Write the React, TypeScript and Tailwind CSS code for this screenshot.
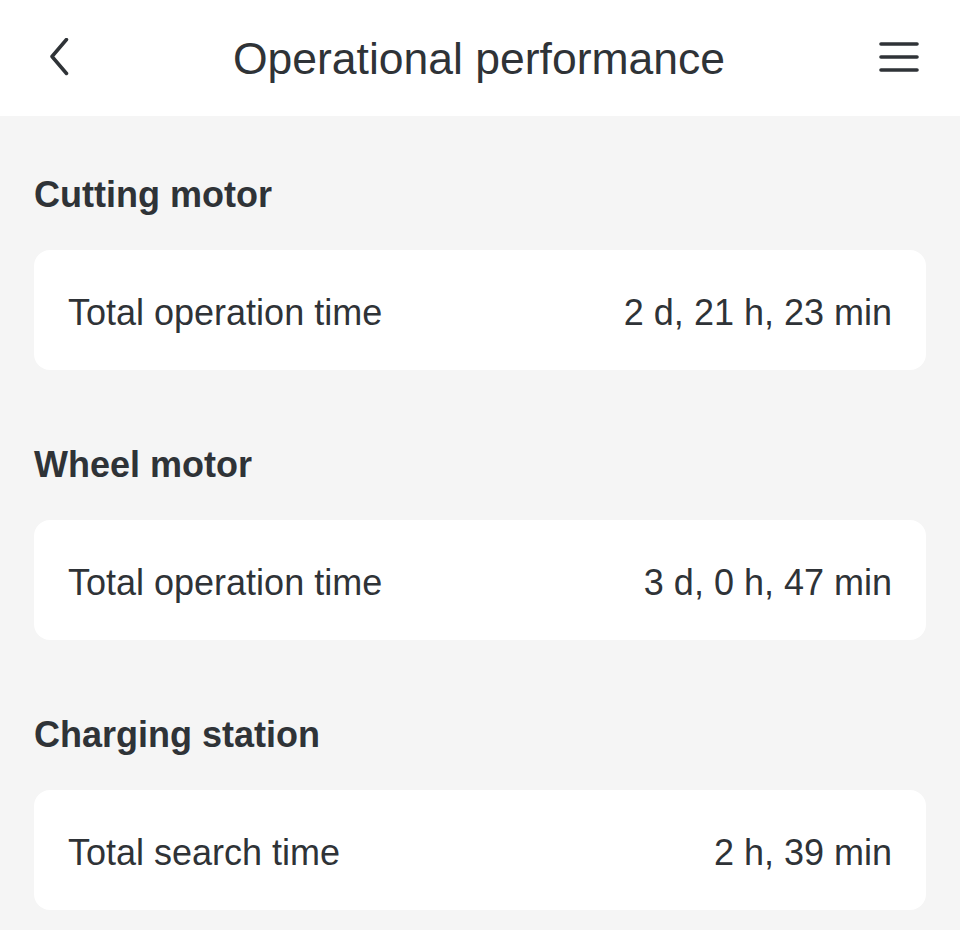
import React from "react";

const sections = [
  { title: "Cutting motor", label: "Total operation time", value: "2 d, 21 h, 23 min" },
  { title: "Wheel motor", label: "Total operation time", value: "3 d, 0 h, 47 min" },
  { title: "Charging station", label: "Total search time", value: "2 h, 39 min" },
];

export default function App() {
  return (
    <div
      className="w-[960px] h-[930px] bg-[#f5f5f5] text-[#2f3337] overflow-hidden"
      style={{ fontFamily: '"Liberation Sans", Arial, sans-serif' }}
    >
      <header className="h-[116px] bg-white flex items-center justify-between pl-[44px] pr-[40px] pb-[1px]">
        <svg width="30" height="40" viewBox="0 0 30 40" fill="none">
          <path d="M22.5 1.5 L8 18.5 L22.5 35.5" stroke="#2f3337" strokeWidth="3.5" strokeLinecap="round" strokeLinejoin="round" />
        </svg>
        <h1 className="text-[44.5px] leading-none font-normal ml-[6px] mt-[4px]">Operational performance</h1>
        <svg width="42" height="34" viewBox="0 0 42 34" fill="none">
          <path d="M3 3 H39 M3 16 H39 M3 29 H39" stroke="#2f3337" strokeWidth="3.6" strokeLinecap="round" />
        </svg>
      </header>
      <main className="px-[34px] pt-[58px] flex flex-col gap-[74px]">
        {sections.map((s) => (
          <section key={s.title} className="flex flex-col gap-[36px]">
            <h2 className="text-[36px] leading-[40px] font-bold mt-[1px] -mb-[1px]">{s.title}</h2>
            <div className="h-[120px] bg-white rounded-[16px] flex items-center justify-between px-[34px] pt-[6px]">
              <span className="text-[36px]">{s.label}</span>
              <span className="text-[36px]">{s.value}</span>
            </div>
          </section>
        ))}
      </main>
    </div>
  );
}
